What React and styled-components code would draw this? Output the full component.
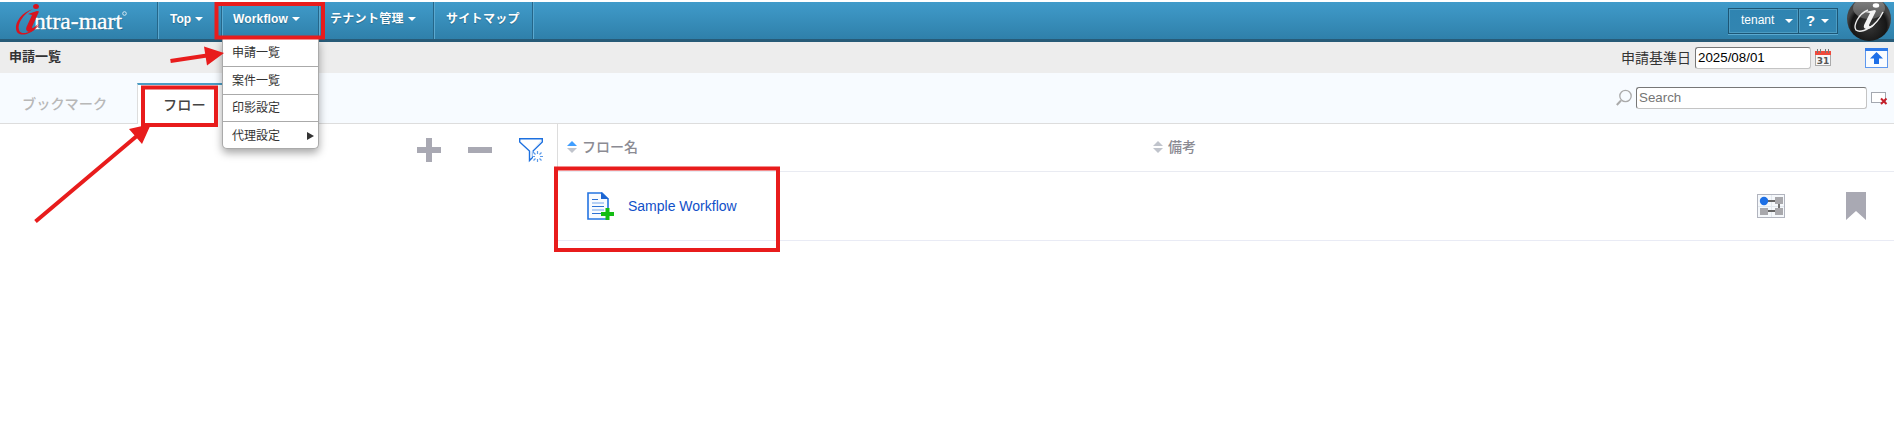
import React from 'react';
import styled, { createGlobalStyle, css } from 'styled-components';

const Global = createGlobalStyle`
  * { box-sizing: border-box; }
  body { margin: 0; background: #fff; overflow: hidden; font-family: "Liberation Sans", "Noto Sans CJK JP", sans-serif; }
  svg { display: block; flex: none; overflow: visible; }
`;
const Page = styled.div`position: relative; width: 1894px; height: 443px; padding-top: 2px; overflow: hidden;`;

const Header = styled.header`
  display: flex; height: 40px; border-bottom: 3px solid #275b78;
  background: linear-gradient(#409bca, #2f80aa);
`;
const Brand = styled.div`width: 157px; padding-left: 16px;`;
const NavItem = styled.div`
  position: relative; display: flex; align-items: center; gap: 4px;
  width: ${p => p.$w}px; padding: 0 0 4px ${p => p.$pad || 11}px; white-space: nowrap;
  border-left: 1px solid #256689; box-shadow: inset 1px 0 #5ba9d0;
  color: #fff; font-size: 12px; line-height: 16px; font-weight: bold;
  letter-spacing: ${p => p.$spacing || 0}px;
  text-shadow: 0 1px 1px rgba(0,0,0,.25);
`;
const Caret = styled.i`
  border: 4px solid transparent; border-top-color: #fff; border-bottom: 0;
  margin: 1px 0 0;
`;
const Menu = styled.ul`
  position: absolute; z-index: 2; left: 0; top: 37px; width: 97px; height: 110px; margin: 0; padding: 0;
  list-style: none; background: #fff; border: 1px solid #aaa; border-top: 0; border-radius: 0 0 5px 5px;
  box-shadow: 0 4px 8px rgba(0,0,0,.35); text-shadow: none; letter-spacing: 0;
`;
const MenuItem = styled.li`
  display: flex; align-items: center; justify-content: space-between; height: 27.4px; padding: 1px 4px 0 9px;
  color: #333; font-size: 12px; font-weight: normal;
  & + & { border-top: 1px solid #aaa; }
`;
const Submenu = styled.i`border: 4px solid transparent; border-left: 7px solid #333; border-right: 0;`;
const UserArea = styled.div`display: flex; align-items: flex-start; margin-left: auto; padding: 6px 2px 0 0;`;
const UserButton = styled.div`
  display: flex; align-items: center; justify-content: space-between; width: ${p => p.$w}px; height: 26px;
  padding: 0 ${p => (p.$bold ? 8 : 5)}px 2px ${p => p.$pad}px; border: 1px solid #1d5675; color: #fff;
  box-shadow: inset 0 0 0 1px #4c9cc3, 0 1px #5ba9d0; background: linear-gradient(#2f84b1, #3285b1);
  font-size: ${p => (p.$bold ? 15 : 12)}px; font-weight: ${p => (p.$bold ? 'bold' : 'normal')};
  & + & { border-left: 0; }
`;
const Emblem = styled.div`width: 45px; height: 40px; margin: -6px 0 0 9px;`;

const TitleBar = styled.div`display: flex; align-items: center; height: 31px; padding: 0 6px 0 9px; background: #ededed;`;
const Title = styled.h1`margin: 0 auto 1px 0; font-size: 13px; line-height: 18px; color: #333;`;
const Label = styled.label`margin: 0 4px 0 0; font-size: 14px; line-height: 20px; color: #333;`;
const Field = styled.input`
  width: ${p => p.$w}px; height: 22px; padding: 0 2px 1px; border: 1px solid #c4c4c4;
  border-top-color: #777; border-left-color: #777; border-radius: 3px; background: #fff;
  font: 13.333px "Liberation Sans", sans-serif; color: #000; outline: 0;
  &::placeholder { color: #757575; opacity: 1; }
`;
const DateIcons = styled.div`display: flex; align-items: center; gap: 34px; margin-left: 4px;`;

const TabBar = styled.div`display: flex; height: 51px; border-bottom: 1px solid #ddd; background: #f7fbff;`;
const Tab = styled.div`
  display: flex; align-items: center; height: 50px; font-size: 14.2px; line-height: 20px; font-weight: 500;
  color: #b8b8b8; width: 137px; padding: 11px 0 0 22px;
  ${p => p.$active && css`
    width: 94px; height: 41px; margin-top: 10px; color: #444;
    background: #fff; border: 1px solid #ddd; border-top: 2px solid #4a9cc4; border-bottom: 0;
    padding: 0 0 0 25px;
  `}
`;
const Search = styled.div`display: flex; align-items: center; gap: 4px; margin: 0 6px 0 auto; padding-bottom: 1px; height: 50px;`;

const Content = styled.main`display: flex; height: 117px;`;
const Side = styled.aside`
  display: flex; justify-content: flex-end; align-items: flex-start; gap: 27px;
  width: 558px; padding: 14px 14px 0 0; border-right: 1px solid #ddd;
`;
const Table = styled.section`flex: 1;`;
const HeadRow = styled.div`display: flex; height: 48px; border-bottom: 1px solid #e9ebf2;`;
const HeadCell = styled.div`
  display: flex; align-items: center; gap: 5px; width: ${p => p.$w}px; padding: 0 0 1px 9px;
  font-size: 14px; line-height: 20px; font-weight: 500; color: #8b8b93;
`;
const Row = styled.div`display: flex; align-items: center; height: 69px; padding: 0 28px 0 29px; border-bottom: 1px solid #e9ebf5;`;
const Link = styled.a`margin: 0 auto 0 14px; color: #1150c8; font-size: 14px; line-height: 20px;`;
const RowIcons = styled.div`display: flex; align-items: center; gap: 61px;`;
const Marks = styled.svg`position: absolute; z-index: 3; left: 0; top: 0; pointer-events: none;`;
const LogoText = styled.text`font-family: "Liberation Serif", serif; font-size: 23px;`;

const Logo = () => (
  <svg width="115" height="37">
    <LogoText fill="#0a3b58" opacity=".45" x="19" y="28" textLength="88" lengthAdjust="spacingAndGlyphs">ntra-mart</LogoText>
    <LogoText fill="#fff" stroke="#fff" strokeWidth=".35" x="18" y="27" textLength="88" lengthAdjust="spacingAndGlyphs">ntra-mart</LogoText>
    <circle cx="108.500" cy="11.500" r="1.800" fill="none" stroke="#d5e8f2" strokeWidth="1" />
    <ellipse cx="20" cy="4.400" rx="2.900" ry="2.500" fill="#d7141f" />
    <path d="M17 7C6 10-1 20 0 27C1 36 15 34 24 22C15 31 5 34 3 28C1 22 7 12 17 7Z" fill="#d7141f" />
    <path d="M12 12L21 9L23 9.500L16 25Q16 28 22 22Q19 29 13 30Q9 29 10.500 25L16 13Z" fill="#d7141f" />
  </svg>
);
const Ball = () => (
  <svg width="45" height="40">
    <defs>
      <clipPath id="ball"><rect width="47" height="41" /></clipPath>
      <radialGradient id="dark" cx=".5" cy=".65"><stop offset="0" stopColor="#383838" /><stop offset=".8" stopColor="#161616" /><stop offset="1" stopColor="#444" /></radialGradient>
      <linearGradient id="shine" x2="0" y2="1"><stop offset="0" stopColor="#888" /><stop offset="1" stopColor="#555" /></linearGradient>
    </defs>
    <g clipPath="url(#ball)">
      <circle cx="22" cy="17" r="22" fill="url(#dark)" />
      <ellipse cx="22" cy="6" rx="16" ry="11" fill="url(#shine)" />
      <ellipse cx="29" cy="3.500" rx="3.200" ry="2.200" fill="#fff" />
      <path d="M18 10L28 8L29 9L22 23Q22 27 30 19Q25 28 19 27Q15 26 18 21L23 11Z" fill="#f4f4f4" />
      <path d="M21 8C11 12 6 24 9 28C14 32 29 25 36 10" fill="none" stroke="#eee" strokeWidth="1.400" />
    </g>
  </svg>
);
const Calendar = () => (
  <svg width="16" height="17">
    <rect x=".5" y="2.500" width="15" height="14" fill="#f8f8f8" stroke="#aaa" />
    <path d="M0 2H16V6H0Z" fill="#f04a3c" />
    <path d="M2.500 0V4M5.500 0V4M10.500 0V4M13.500 0V4" stroke="#777" />
    <text x="1.800" y="15" fontFamily="DejaVu Sans" fontSize="9.500" fontWeight="bold" textLength="12.500" lengthAdjust="spacingAndGlyphs" fill="#555">31</text>
  </svg>
);
const Upload = () => (
  <svg width="23" height="20">
    <rect x=".5" y=".5" width="22" height="19" fill="#f9fcff" stroke="#5e98ee" />
    <path d="M0 0H23V3H0Z" fill="#2f7bea" />
    <path d="M11.500 4L18 10.500H14V16H9V10.500H5Z" fill="#1d6fe8" />
  </svg>
);
const Magnifier = () => (
  <svg width="16" height="18" fill="none" stroke="#aaa">
    <circle cx="9.500" cy="7" r="5.700" strokeWidth="1.300" /><path d="M5 11.500L.8 16" strokeWidth="2" />
  </svg>
);
const Clear = () => (
  <svg width="17" height="14">
    <rect x=".5" y="1.500" width="14" height="10" fill="#fff" stroke="#a4a8b0" />
    <path d="M10 7.500L15.500 13M15.500 7.500L10 13" stroke="#c6202b" strokeWidth="2" />
  </svg>
);
const Plus = () => <svg width="24" height="24"><path d="M9 0H15V9H24V15H15V24H9V15H0V9H9Z" fill="#a9a9b3" /></svg>;
const Minus = () => <svg width="24" height="24"><path d="M0 9H24V15H0Z" fill="#a9a9b3" /></svg>;
const Filter = () => (
  <svg width="24" height="24">
    <path d="M.7.700H23.300V4L14 13V19L10.500 22.500V13L.7 4Z" fill="#fff" stroke="#1d70df" strokeWidth="1.400" />
    <path d="M12 14V20L14 18V12L22 4V2Z" fill="#c9dffa" opacity=".6" />
    <path d="M14 15H24V24H14Z" fill="#fff" />
    <path d="M18.500 13V16M18.500 21V24M13 18.500H16M21 18.500H24M14.500 14.500L16.500 16.500M20.500 20.500L22.500 22.500M22.500 14.500L20.500 16.500M16.500 20.500L14.500 22.500" stroke="#5c9bea" strokeWidth="1.200" />
  </svg>
);
const Sort = ({ active }) => (
  <svg width="10" height="12"><path d="M0 5L5 0L10 5Z" fill={active ? '#409eff' : '#c0c4cc'} /><path d="M0 7H10L5 12Z" fill="#c0c4cc" /></svg>
);
const Document = () => (
  <svg width="27" height="28">
    <path d="M1 1H15L21 7V27H1Z" fill="#f8fbff" stroke="#2374e1" strokeWidth="1.600" />
    <path d="M14 0L22 7H14Z" fill="#1d66d2" />
    <path d="M5 7.500H11M5 14.500H17M5 21.500H14" stroke="#2c71d4" /><path d="M5 11H17M5 18H17" stroke="#9fc2f2" strokeWidth="1.600" />
    <path d="M18.500 16H22.500V20H27V24H22.500V28H18.500V24H14V20H18.500Z" fill="#13bd13" />
  </svg>
);
const Diagram = () => (
  <svg width="28" height="24">
    <rect x=".5" y=".5" width="27" height="23" fill="#f5f8fb" stroke="#b1b4be" />
    <path d="M14.500 1V23M1 12.500H27" stroke="#e2e8ee" />
    <path d="M7 7H22V17H7" fill="none" stroke="#666" strokeWidth="1.800" />
    <circle cx="7" cy="7" r="4.200" fill="#1d70e5" />
    <path d="M18 3H26V10H18ZM18 14H26V21H18ZM3 14H11V21H3Z" fill="#a8a8ac" />
  </svg>
);
const Bookmark = () => <svg width="20" height="28"><path d="M0 0H20V28L10 19L0 28Z" fill="#a9a9b3" /></svg>;

export default function App() {
  return (
    <Page>
      <Global />
      <Header>
        <Brand><Logo /></Brand>
        <NavItem $w={64} $pad={12}>Top<Caret /></NavItem>
        <NavItem $w={97} $spacing={0.15}>Workflow<Caret />
          <Menu>
            <MenuItem>申請一覧</MenuItem>
            <MenuItem>案件一覧</MenuItem>
            <MenuItem>印影設定</MenuItem>
            <MenuItem>代理設定<Submenu /></MenuItem>
          </Menu>
        </NavItem>
        <NavItem $w={115} $spacing={0.3}>テナント管理<Caret /></NavItem>
        <NavItem $w={99} $pad={12} $spacing={0.3}>サイトマップ</NavItem>
        <NavItem $w={2} />
        <UserArea>
          <UserButton $w={71} $pad={12}>tenant<Caret /></UserButton>
          <UserButton $w={39} $pad={7} $bold>?<Caret /></UserButton>
          <Emblem><Ball /></Emblem>
        </UserArea>
      </Header>
      <TitleBar>
        <Title>申請一覧</Title>
        <Label>申請基準日</Label>
        <Field $w={116} defaultValue="2025/08/01" />
        <DateIcons><Calendar /><Upload /></DateIcons>
      </TitleBar>
      <TabBar>
        <Tab>ブックマーク</Tab>
        <Tab $active>フロー</Tab>
        <Search><Magnifier /><Field $w={231} placeholder="Search" /><Clear /></Search>
      </TabBar>
      <Content>
        <Side><Plus /><Minus /><Filter /></Side>
        <Table>
          <HeadRow>
            <HeadCell $w={586}><Sort active />フロー名</HeadCell>
            <HeadCell $w={300}><Sort />備考</HeadCell>
          </HeadRow>
          <Row>
            <Document />
            <Link>Sample Workflow</Link>
            <RowIcons><Diagram /><Bookmark /></RowIcons>
          </Row>
        </Table>
      </Content>
      <Marks width="1894" height="443" fill="none" stroke="#e81c1c" strokeWidth="4">
        <path d="M216.500 4H323V37.500H216.500Z" />
        <path d="M143 87.500H216V125H143Z" />
        <path d="M556 168.500H778V250H556Z" />
        <path d="M170.500 61L207 55.500M35.500 221.500L138 135" />
        <path d="M204 46.500L224 53L207 65.500ZM129 129L151 124L142 144Z" fill="#e81c1c" stroke="none" />
      </Marks>
    </Page>
  );
}
